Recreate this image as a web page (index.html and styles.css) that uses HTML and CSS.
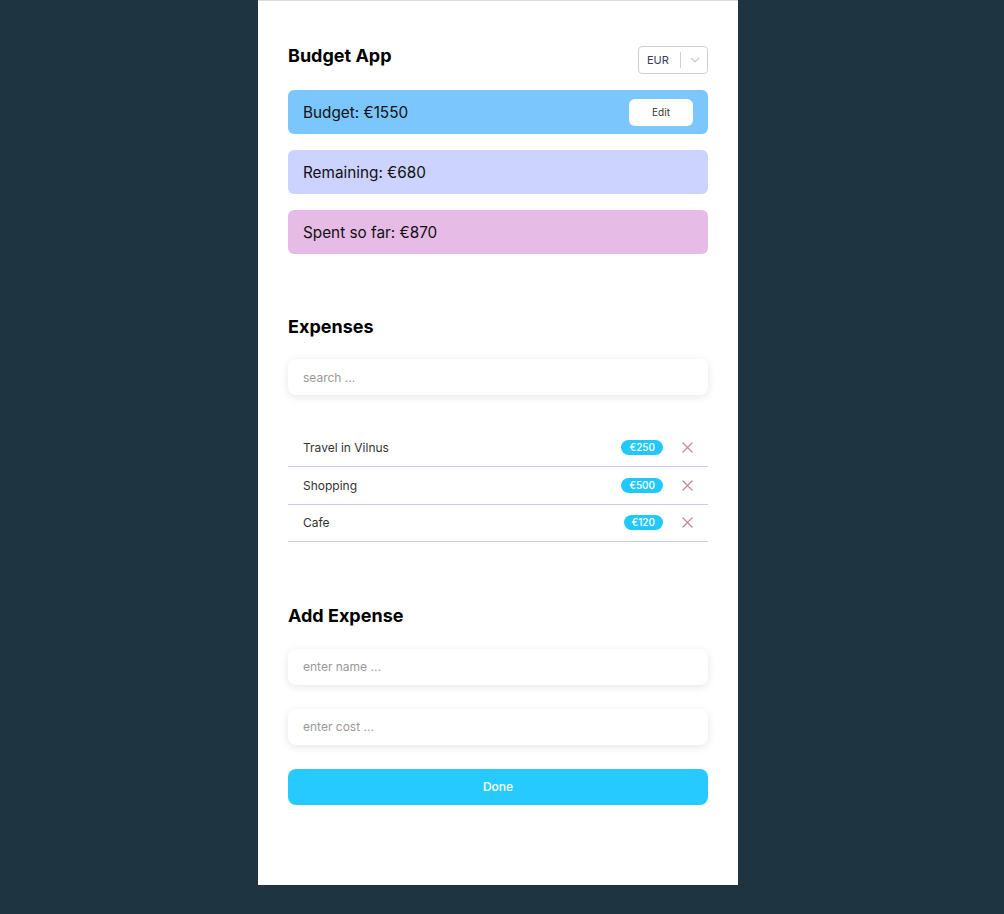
FILE: index.html
```html
<!DOCTYPE html>
<html lang="en">
<head>
<meta charset="utf-8">
<title>Budget App</title>
<link rel="stylesheet" href="styles.css">
</head>
<body>
<main class="app">
  <header class="top">
    <h1 class="title">Budget App</h1>
    <div class="select">
      <span class="select-value">EUR</span>
      <span class="select-sep"></span>
      <svg class="chev" width="10" height="6" viewBox="0 0 10 6"><path d="M1 1 L5 5 L9 1" fill="none" stroke="#c8c8c8" stroke-width="1.2"/></svg>
    </div>
  </header>

  <section class="summary">
    <div class="stat stat-budget">
      <span>Budget: €1550</span>
      <button class="edit">Edit</button>
    </div>
    <div class="stat stat-remaining"><span>Remaining: €680</span></div>
    <div class="stat stat-spent"><span>Spent so far: €870</span></div>
  </section>

  <h2 class="heading heading-expenses">Expenses</h2>
  <div class="field">search ...</div>

  <ul class="list">
    <li class="item">
      <span class="item-name">Travel in Vilnus</span>
      <span class="badge">€250</span>
      <svg class="del" width="11" height="11" viewBox="0 0 11 11"><path d="M0.5 0.5 L10.5 10.5 M10.5 0.5 L0.5 10.5" stroke="#c98aa9" stroke-width="1.4" fill="none"/></svg>
    </li>
    <li class="item">
      <span class="item-name">Shopping</span>
      <span class="badge">€500</span>
      <svg class="del" width="11" height="11" viewBox="0 0 11 11"><path d="M0.5 0.5 L10.5 10.5 M10.5 0.5 L0.5 10.5" stroke="#c98aa9" stroke-width="1.4" fill="none"/></svg>
    </li>
    <li class="item">
      <span class="item-name">Cafe</span>
      <span class="badge">€120</span>
      <svg class="del" width="11" height="11" viewBox="0 0 11 11"><path d="M0.5 0.5 L10.5 10.5 M10.5 0.5 L0.5 10.5" stroke="#c98aa9" stroke-width="1.4" fill="none"/></svg>
    </li>
  </ul>

  <h2 class="heading heading-add">Add Expense</h2>
  <div class="form">
    <div class="field">enter name ...</div>
    <div class="field">enter cost ...</div>
    <button class="done">Done</button>
  </div>
</main>
</body>
</html>
```

FILE: styles.css
```css
* { box-sizing: border-box; }

html, body {
  margin: 0;
  padding: 0;
}

body {
  background: #1f3441;
  font-family: Inter, "Noto Sans", sans-serif;
  color: #111;
  padding-right: 8px;
  min-height: 914px;
}

.app {
  width: 480px;
  min-height: 885px;
  margin: 0 auto;
  background: #fff;
  border-top: 1px solid #dcdcdc;
  padding: 44px 30px 40px;
}

.top {
  display: flex;
  justify-content: space-between;
  align-items: flex-start;
}

.title {
  margin: 0;
  font-size: 18px;
  line-height: 22px;
  font-weight: 700;
  color: #000;
}

.select {
  margin-top: 1px;
  width: 70px;
  height: 28px;
  border: 1px solid #cfcfcf;
  border-radius: 4px;
  display: flex;
  align-items: center;
  padding-left: 8px;
}

.select-value {
  font-size: 11px;
  color: #3b3b5c;
}

.select-sep {
  width: 1px;
  height: 16px;
  background: #d0d0d0;
  margin-left: 11px;
}

.chev {
  margin-left: 9px;
}

.summary {
  margin-top: 16px;
  display: flex;
  flex-direction: column;
  gap: 16px;
}

.stat {
  height: 44px;
  border-radius: 6px;
  padding: 0 15px;
  display: flex;
  align-items: center;
  justify-content: space-between;
  font-size: 15.3px;
  color: #111;
}

.stat-budget { background: #7cc6fe; }
.stat-remaining { background: #ccd3fe; }
.stat-spent { background: #e6bbe5; }

.edit {
  width: 64px;
  height: 27px;
  border: none;
  border-radius: 6px;
  background: #fff;
  font-family: inherit;
  font-size: 10px;
  color: #333;
  padding: 0;
}

.heading {
  margin: 0;
  font-size: 18px;
  line-height: 22px;
  font-weight: 700;
  color: #000;
}

.heading-expenses { margin-top: 62px; }

.field {
  margin-top: 21px;
  height: 36px;
  border-radius: 8px;
  background: #fff;
  box-shadow: 0 2px 8px rgba(0, 0, 0, 0.1);
  padding: 0 15px;
  display: flex;
  align-items: center;
  font-size: 12px;
  color: #999;
}

.list {
  list-style: none;
  margin: 34.5px 0 0;
  padding: 0;
}

.item {
  display: flex;
  align-items: center;
  height: 37.5px;
  padding: 0 15px;
  border-bottom: 1px solid #c6cefc;
  font-size: 12px;
  color: #333;
}

.item-name { flex: 1; }

.badge {
  background: #23c8fb;
  color: #fff;
  font-size: 10px;
  font-weight: 500;
  line-height: 15px;
  padding: 0 8px;
  border-radius: 8px;
}

.del {
  margin-left: 19px;
}

.heading-add { margin-top: 62.5px; }

.form {
  display: flex;
  flex-direction: column;
  gap: 24px;
  margin-top: 22px;
}

.form .field { margin-top: 0; }

.done {
  height: 36px;
  border: none;
  border-radius: 8px;
  background: #26cafe;
  color: #fff;
  font-family: inherit;
  font-size: 12px;
  font-weight: 500;
  padding: 0;
}
```
